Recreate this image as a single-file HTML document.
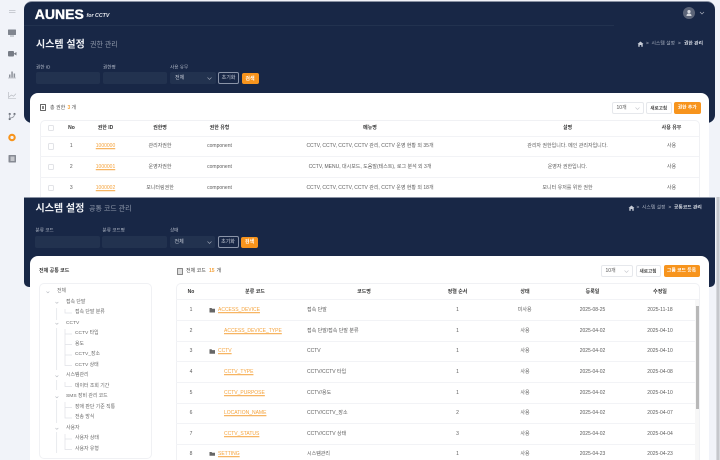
<!DOCTYPE html>
<html lang="ko">
<head>
<meta charset="utf-8">
<title>시스템 설정</title>
<style>
html,body{margin:0;padding:0;width:720px;height:460px;overflow:hidden;background:#f1f3f9}
#p{position:absolute;left:0;top:0;width:720px;height:460px;overflow:hidden;background:#f1f3f9;font-family:"Liberation Sans","Noto Sans CJK KR",sans-serif;color:#5c5c5c;font-size:5px;filter:blur(.22px)}
#p div,#p span,#p b,#p svg{position:absolute;box-sizing:border-box}
#p span,#p b{white-space:nowrap;line-height:1;transform:translateY(-36%)}
#p .c{transform:translate(-50%,-36%)}
b{font-weight:700}
.h{color:#333;font-weight:700}
.nav{background:#182746;left:24px;width:691px}
.card{background:#fff;left:30px;width:679px}
.lb{color:#b4bbc9;font-size:4.6px}
.in{background:#22324f;border-radius:2px;height:12px}
.wb{color:#c8cdd8}
.btnO{background:#f7941d;border-radius:2px;color:#fff;font-weight:700}
.btnB{border:.7px solid #8a94a8;border-radius:2px}
.btnW{border:.7px solid #e6e8ec;border-radius:2px;background:#fff}
.box{border:.7px solid #f0f1f4;border-radius:5px;background:#fff}
.ln{background:#f2f3f6;height:.7px}
.cb{width:6.500px;height:6.500px;border:.7px solid #e2e3e7;border-radius:1.500px;background:#fff}
.o{color:#f5a33c;text-decoration:underline}
.tr{font-size:4.9px;color:#6a6a6a}
</style>
</head>
<body>
<div id="p">
<!-- sidebar -->
<svg style="left:0;top:0" width="24" height="170" viewBox="0 0 24 170">
<path d="M9 10.500h6.500M9 12.500h6.500" stroke="#c9ccd3" stroke-width="1" fill="none"/>
<rect x="8" y="29.500" width="8" height="5.500" rx=".5" fill="#80858f"/><rect x="10" y="35.500" width="4" height="1" fill="#a0a4ac"/>
<rect x="8" y="51" width="6" height="5.500" rx="1" fill="#777c86"/><path d="M14 53.500l2.500-1.500v3.500L14 54z" fill="#777c86"/>
<path d="M9 77.500v-3h1.500v3zM11.300 77.500v-6h1.500v6zM13.600 77.500v-4h1.500v4z" fill="#8d919a"/><path d="M8 78h8" stroke="#a5a8b0" stroke-width=".6"/>
<path d="M8.500 92v6.500h7.500M9 97l2.500-2 2 1.200 2.500-2.500" stroke="#b0b3ba" stroke-width=".6" fill="none"/>
<circle cx="9.700" cy="114" r="1.100" fill="#6f747e"/><circle cx="9.700" cy="119" r="1.100" fill="#6f747e"/><circle cx="14.500" cy="114" r="1.100" fill="#6f747e"/><path d="M9.700 114v5M9.700 118c3 0 4.800-1 4.800-4" stroke="#8a8e97" stroke-width=".7" fill="none"/>
<circle cx="12" cy="137.500" r="2.700" fill="none" stroke="#f7941d" stroke-width="2.100"/>
<rect x="8.500" y="155" width="7.500" height="7.500" rx=".6" fill="#868a93"/><rect x="10.500" y="156.500" width="4" height="4.500" fill="#c5c7cc"/>
</svg>

<!-- top navy -->
<div class="nav" style="top:1px;height:122px;border-radius:8px;border-top:.7px solid #8a92a3"></div>
<div style="left:24px;top:25px;width:590px;height:.7px;background:#22324f"></div>
<b style="left:34.800px;top:11.600px;font-size:14px;color:#fff;-webkit-text-stroke:.35px #fff">AUNES</b>
<b style="left:86.500px;top:15.800px;font-size:5.300px;color:#e6e8ee;font-style:italic">for CCTV</b>
<div style="left:683px;top:7px;width:12px;height:12px;border-radius:50%;background:#5b6478"></div>
<svg style="left:683px;top:7px" width="24" height="12" viewBox="0 0 24 12"><circle cx="6" cy="4.600" r="1.600" fill="#d5d8de"/><path d="M3.500 9c0-2 1-2.500 2.500-2.500S8.500 7 8.500 9z" fill="#d5d8de"/><path d="M17 5l2 2 2-2" stroke="#a8aebb" stroke-width=".7" fill="none"/></svg>

<b style="left:36px;top:44px;font-size:10px;color:#eef0f4">시스템 설정</b>
<span style="left:90px;top:44px;font-size:7px;color:#8f98aa">권한 관리</span>
<svg style="left:637px;top:41px" width="7" height="6" viewBox="0 0 7 6"><path d="M.5 3L3.500.5 6.500 3H5.700v2.700H4.300V4H2.700v1.700H1.300V3z" fill="#c7ccd6"/></svg>
<span class="wb" style="left:646px;top:44px;font-size:4.800px">&gt;</span>
<span class="wb" style="left:651.500px;top:44px;font-size:4.800px;color:#a5adbc">시스템 설정</span>
<span class="wb" style="left:678px;top:44px;font-size:4.800px">&gt;</span>
<b style="left:684px;top:44px;font-size:4.800px;color:#d8dce4">권한 관리</b>

<span class="lb" style="left:36px;top:66.500px">권한 ID</span>
<span class="lb" style="left:103px;top:66.500px">권한명</span>
<span class="lb" style="left:170px;top:66.500px">사용 유무</span>
<div class="in" style="left:36px;top:72px;width:64px"></div>
<div class="in" style="left:103px;top:72px;width:64px"></div>
<div class="in" style="left:170px;top:72px;width:45.500px"></div>
<span class="wb" style="left:175px;top:78.300px">전체</span>
<svg style="left:207px;top:77px" width="5" height="3" viewBox="0 0 5 3"><path d="M.5.500l2 2 2-2" stroke="#a0a8b8" stroke-width=".6" fill="none"/></svg>
<div class="btnB" style="left:218px;top:72px;width:21px;height:12px"></div>
<span class="c wb" style="left:228.500px;top:78px">초기화</span>
<div class="btnO" style="left:241.500px;top:73px;width:17px;height:11px"></div>
<b class="c" style="left:250px;top:78.500px;color:#fff">검색</b>

<!-- card 1 -->
<div class="card" style="top:93px;height:105px;border-radius:8px 8px 0 0"></div>
<div style="left:40px;top:104px;width:6px;height:7px;border:.8px solid #666;border-radius:.5px"></div>
<div style="left:42px;top:106px;width:2px;height:3px;background:#888"></div>
<span style="left:50px;top:107.500px;color:#555">총 권한</span>
<b style="left:67.500px;top:107.500px;color:#f5a33c">3</b>
<span style="left:71.500px;top:107.500px;color:#555">개</span>
<div class="btnW" style="left:611.500px;top:102px;width:32px;height:11.500px"></div>
<span style="left:616.500px;top:107.800px;color:#555">10개</span>
<svg style="left:635px;top:106.500px" width="5" height="3" viewBox="0 0 5 3"><path d="M.5.500l2 2 2-2" stroke="#c5c7cc" stroke-width=".6" fill="none"/></svg>
<div class="btnW" style="left:646px;top:102px;width:25.500px;height:11.500px"></div>
<span class="c" style="left:658.700px;top:107.800px;color:#444;font-weight:700;font-size:4.600px">새로고침</span>
<div class="btnO" style="left:674px;top:102px;width:26.500px;height:11.500px"></div>
<b class="c" style="left:687.200px;top:107.800px;color:#fff;font-size:4.800px">권한 추가</b>

<div class="box" style="left:40px;top:119.500px;width:659.500px;height:90px"></div>
<div class="ln" style="left:40px;top:135.500px;width:659px"></div>
<div class="ln" style="left:40px;top:156px;width:659px"></div>
<div class="ln" style="left:40px;top:176.500px;width:659px"></div>
<div class="cb" style="left:47.500px;top:124.500px"></div>
<div class="cb" style="left:47.500px;top:143px"></div>
<div class="cb" style="left:47.500px;top:163.500px"></div>
<div class="cb" style="left:47.500px;top:184.500px"></div>

<span class="c h" style="left:71.500px;top:127.700px">No</span>
<span class="c h" style="left:105.500px;top:127.700px">권한 ID</span>
<span class="c h" style="left:160px;top:127.700px">권한명</span>
<span class="c h" style="left:219.500px;top:127.700px">권한 유형</span>
<span class="c h" style="left:370px;top:127.700px">메뉴명</span>
<span class="c h" style="left:567.500px;top:127.700px">설명</span>
<span class="c h" style="left:671.500px;top:127.700px">사용 유무</span>

<span class="c" style="left:71.300px;top:146.300px">1</span>
<span class="c o" style="left:105.500px;top:146.300px">1000000</span>
<span class="c" style="left:160px;top:146.300px">관리자권한</span>
<span class="c" style="left:219.500px;top:146.300px">component</span>
<span class="c" style="left:370px;top:146.300px">CCTV, CCTV, CCTV, CCTV 관리, CCTV 운영 현황 외 35개</span>
<span class="c" style="left:567.500px;top:146.300px">관리자 권한입니다. 메인 관리자입니다.</span>
<span class="c" style="left:671.500px;top:146.300px">사용</span>

<span class="c" style="left:71.300px;top:166.800px">2</span>
<span class="c o" style="left:105.500px;top:166.800px">1000001</span>
<span class="c" style="left:160px;top:166.800px">운영자권한</span>
<span class="c" style="left:219.500px;top:166.800px">component</span>
<span class="c" style="left:370px;top:166.800px">CCTV, MENU, 대시보드, 도움말(테스트), 로그 분석 외 3개</span>
<span class="c" style="left:567.500px;top:166.800px">운영자 권한입니다.</span>
<span class="c" style="left:671.500px;top:166.800px">사용</span>

<span class="c" style="left:71.300px;top:187.500px">3</span>
<span class="c o" style="left:105.500px;top:187.500px">1000002</span>
<span class="c" style="left:160px;top:187.500px">모니터링권한</span>
<span class="c" style="left:219.500px;top:187.500px">component</span>
<span class="c" style="left:370px;top:187.500px">CCTV, CCTV, CCTV, CCTV 관리, CCTV 운영 현황 외 18개</span>
<span class="c" style="left:567.500px;top:187.500px">모니터 유저를 위한 권한</span>
<span class="c" style="left:671.500px;top:187.500px">사용</span>

<!-- bottom screenshot -->
<div style="left:0;top:197px;width:720px;height:263px;background:#f1f3f9"></div>
<div class="nav" style="left:23.500px;top:197px;height:90px;width:691.500px;border-radius:0 0 5px 5px;border-top:.9px solid #8a92a3"></div>
<div style="left:715.500px;top:197px;width:4.500px;height:263px;background:#d7d9de"></div>
<div style="left:717px;top:197px;width:1.500px;height:263px;background:#c5c7cc"></div>

<b style="left:35.500px;top:207.500px;font-size:10px;color:#eef0f4">시스템 설정</b>
<span style="left:89px;top:207.500px;font-size:7px;color:#8f98aa">공통 코드 관리</span>
<svg style="left:627.500px;top:204.500px" width="7" height="6" viewBox="0 0 7 6"><path d="M.5 3L3.500.5 6.500 3H5.700v2.700H4.300V4H2.700v1.700H1.300V3z" fill="#c7ccd6"/></svg>
<span class="wb" style="left:636.500px;top:207.500px;font-size:4.800px">&gt;</span>
<span style="left:642px;top:207.500px;font-size:4.800px;color:#a5adbc">시스템 설정</span>
<span class="wb" style="left:668.500px;top:207.500px;font-size:4.800px">&gt;</span>
<b style="left:674px;top:207.500px;font-size:4.800px;color:#d8dce4">공통코드 관리</b>

<span class="lb" style="left:35.500px;top:230px">분류 코드</span>
<span class="lb" style="left:102.500px;top:230px">분류 코드명</span>
<span class="lb" style="left:170px;top:230px">상태</span>
<div class="in" style="left:35px;top:236px;width:65px"></div>
<div class="in" style="left:102px;top:236px;width:65px"></div>
<div class="in" style="left:169.500px;top:236px;width:45.500px"></div>
<span class="wb" style="left:174.500px;top:242px">전체</span>
<svg style="left:206.500px;top:240.500px" width="5" height="3" viewBox="0 0 5 3"><path d="M.5.500l2 2 2-2" stroke="#a0a8b8" stroke-width=".6" fill="none"/></svg>
<div class="btnB" style="left:217.500px;top:236px;width:21px;height:12px"></div>
<span class="c wb" style="left:228px;top:242px">초기화</span>
<div class="btnO" style="left:241px;top:236.500px;width:17px;height:11.500px"></div>
<b class="c" style="left:249.500px;top:242px;color:#fff">검색</b>

<!-- card 2 -->
<div class="card" style="left:29.500px;top:256px;width:679.500px;height:204px;border-radius:8px 8px 0 0"></div>
<span class="h" style="left:39px;top:271px;font-size:5px;color:#333">전체 공통 코드</span>

<div class="box" style="left:38.800px;top:282.700px;width:113px;height:176.500px"></div>
<svg style="left:39px;top:283px" width="40" height="177" viewBox="39 283 40 177" fill="none">
<g stroke="#b0b3ba" stroke-width=".55"><path d="M46.500 291.500l1.400 1.400 1.400-1.400M55.500 302l1.400 1.400 1.400-1.400M55.500 323l1.400 1.400 1.400-1.400M55.500 375.500l1.400 1.400 1.400-1.400M55.500 396.500l1.400 1.400 1.400-1.400M55.500 428l1.400 1.400 1.400-1.400"/></g>
<g stroke="#dfe1e6" stroke-width=".7"><path d="M56.700 308v12M56.700 328v42M56.700 380v10M56.700 400v23M56.700 432v21"/><path d="M65 309v4h7M65 329v36.500h7M65 334h7M65 344.500h7M65 355h7M65 382v4.500h7M65 402v16h7M65 407.500h7M65 434v15.500h7M65 439h7"/></g>
</svg>
<span class="tr" style="left:57px;top:292.200px">전체</span>
<span class="tr" style="left:66px;top:302.800px">접속 단말</span>
<span class="tr" style="left:75px;top:313px">접속 단말 분류</span>
<span class="tr" style="left:66px;top:323.800px">CCTV</span>
<span class="tr" style="left:75px;top:334.200px">CCTV 타입</span>
<span class="tr" style="left:75px;top:344.700px">용도</span>
<span class="tr" style="left:75px;top:355.200px">CCTV_장소</span>
<span class="tr" style="left:75px;top:365.700px">CCTV 상태</span>
<span class="tr" style="left:66px;top:376.200px">시스템관리</span>
<span class="tr" style="left:75px;top:386.700px">데이터 조회 기간</span>
<span class="tr" style="left:66px;top:397.200px">SMS 장비 관리 코드</span>
<span class="tr" style="left:75px;top:407.700px">장애 판단 기준 직통</span>
<span class="tr" style="left:75px;top:418.200px">전송 방식</span>
<span class="tr" style="left:66px;top:428.700px">사용자</span>
<span class="tr" style="left:75px;top:439.200px">사용자 상태</span>
<span class="tr" style="left:75px;top:449.700px">사용자 유형</span>

<div style="left:176.500px;top:268px;width:6.500px;height:7px;border:.8px solid #888;background:#ddd;border-radius:.5px"></div>
<span style="left:186px;top:271.300px;color:#444">전체 코드</span>
<b style="left:209px;top:271.300px;color:#f5a33c">15</b>
<span style="left:216.500px;top:271.300px;color:#444">개</span>

<div class="btnW" style="left:600.500px;top:265px;width:32px;height:11.500px"></div>
<span style="left:605.500px;top:271px;color:#555">10개</span>
<svg style="left:624px;top:270px" width="5" height="3" viewBox="0 0 5 3"><path d="M.5.500l2 2 2-2" stroke="#c5c7cc" stroke-width=".6" fill="none"/></svg>
<div class="btnW" style="left:635.500px;top:265px;width:25px;height:11.500px"></div>
<span class="c" style="left:648px;top:271px;color:#444;font-weight:700;font-size:4.600px">새로고침</span>
<div class="btnO" style="left:663.500px;top:265px;width:36px;height:11.500px"></div>
<b class="c" style="left:681.500px;top:271px;color:#fff;font-size:4.800px">그룹 코드 등록</b>

<div class="box" style="left:176px;top:282.700px;width:523.500px;height:190px"></div>
<div class="ln" style="left:176px;top:299px;width:523px"></div>
<div class="ln" style="left:176px;top:320px;width:519px"></div>
<div class="ln" style="left:176px;top:340.500px;width:519px"></div>
<div class="ln" style="left:176px;top:361.300px;width:519px"></div>
<div class="ln" style="left:176px;top:382px;width:519px"></div>
<div class="ln" style="left:176px;top:402.700px;width:519px"></div>
<div class="ln" style="left:176px;top:423.300px;width:519px"></div>
<div class="ln" style="left:176px;top:444px;width:519px"></div>

<span class="c h" style="left:191px;top:291.500px">No</span>
<span class="c h" style="left:255px;top:291.500px">분류 코드</span>
<span class="c h" style="left:364px;top:291.500px">코드명</span>
<span class="c h" style="left:457.500px;top:291.500px">정렬 순서</span>
<span class="c h" style="left:525px;top:291.500px">상태</span>
<span class="c h" style="left:592.500px;top:291.500px">등록일</span>
<span class="c h" style="left:660px;top:291.500px">수정일</span>

<svg style="left:209px;top:306px" width="7" height="152" viewBox="0 0 7 152">
<path d="M.5 2h2l.7.8H6v3.700H.5z" fill="#666"/>
<path d="M.5 43.300h2l.7.8H6v3.700H.5z" fill="#666"/>
<path d="M.5 146h2l.7.8H6v3H.5z" fill="#666"/>
</svg>

<span class="c" style="left:191px;top:309.800px">1</span>
<span class="o" style="left:218px;top:309.800px">ACCESS_DEVICE</span>
<span style="left:307px;top:309.800px">접속 단말</span>
<span class="c" style="left:457.500px;top:309.800px">1</span>
<span class="c" style="left:524.700px;top:309.800px">미사용</span>
<span class="c" style="left:592.500px;top:309.800px">2025-08-25</span>
<span class="c" style="left:660px;top:309.800px">2025-11-18</span>

<span class="c" style="left:191px;top:330.500px">2</span>
<span class="o" style="left:224px;top:330.500px">ACCESS_DEVICE_TYPE</span>
<span style="left:307px;top:330.500px">접속 단말/접속 단말 분류</span>
<span class="c" style="left:457.500px;top:330.500px">1</span>
<span class="c" style="left:525px;top:330.500px">사용</span>
<span class="c" style="left:592.500px;top:330.500px">2025-04-02</span>
<span class="c" style="left:660px;top:330.500px">2025-04-10</span>

<span class="c" style="left:191px;top:351.200px">3</span>
<span class="o" style="left:218px;top:351.200px">CCTV</span>
<span style="left:307px;top:351.200px">CCTV</span>
<span class="c" style="left:457.500px;top:351.200px">1</span>
<span class="c" style="left:525px;top:351.200px">사용</span>
<span class="c" style="left:592.500px;top:351.200px">2025-04-02</span>
<span class="c" style="left:660px;top:351.200px">2025-04-10</span>

<span class="c" style="left:191px;top:371.800px">4</span>
<span class="o" style="left:224px;top:371.800px">CCTV_TYPE</span>
<span style="left:307px;top:371.800px">CCTV/CCTV 타입</span>
<span class="c" style="left:457.500px;top:371.800px">1</span>
<span class="c" style="left:525px;top:371.800px">사용</span>
<span class="c" style="left:592.500px;top:371.800px">2025-04-02</span>
<span class="c" style="left:660px;top:371.800px">2025-04-08</span>

<span class="c" style="left:191px;top:392.500px">5</span>
<span class="o" style="left:224px;top:392.500px">CCTV_PURPOSE</span>
<span style="left:307px;top:392.500px">CCTV/용도</span>
<span class="c" style="left:457.500px;top:392.500px">1</span>
<span class="c" style="left:525px;top:392.500px">사용</span>
<span class="c" style="left:592.500px;top:392.500px">2025-04-02</span>
<span class="c" style="left:660px;top:392.500px">2025-04-10</span>

<span class="c" style="left:191px;top:413.200px">6</span>
<span class="o" style="left:224px;top:413.200px">LOCATION_NAME</span>
<span style="left:307px;top:413.200px">CCTV/CCTV_장소</span>
<span class="c" style="left:457.500px;top:413.200px">2</span>
<span class="c" style="left:525px;top:413.200px">사용</span>
<span class="c" style="left:592.500px;top:413.200px">2025-04-02</span>
<span class="c" style="left:660px;top:413.200px">2025-04-07</span>

<span class="c" style="left:191px;top:433.800px">7</span>
<span class="o" style="left:224px;top:433.800px">CCTV_STATUS</span>
<span style="left:307px;top:433.800px">CCTV/CCTV 상태</span>
<span class="c" style="left:457.500px;top:433.800px">3</span>
<span class="c" style="left:525px;top:433.800px">사용</span>
<span class="c" style="left:592.500px;top:433.800px">2025-04-02</span>
<span class="c" style="left:660px;top:433.800px">2025-04-04</span>

<span class="c" style="left:191px;top:454.200px">8</span>
<span class="o" style="left:218px;top:454.200px">SETTING</span>
<span style="left:307px;top:454.200px">시스템관리</span>
<span class="c" style="left:457.500px;top:454.200px">1</span>
<span class="c" style="left:525px;top:454.200px">사용</span>
<span class="c" style="left:592.500px;top:454.200px">2025-04-23</span>
<span class="c" style="left:660px;top:454.200px">2025-04-23</span>

<div style="left:695px;top:300px;width:4px;height:160px;background:#f7f7f7"></div>
<div style="left:695.500px;top:306px;width:3px;height:103px;background:#b8b8b8"></div>
</div>
</body>
</html>
